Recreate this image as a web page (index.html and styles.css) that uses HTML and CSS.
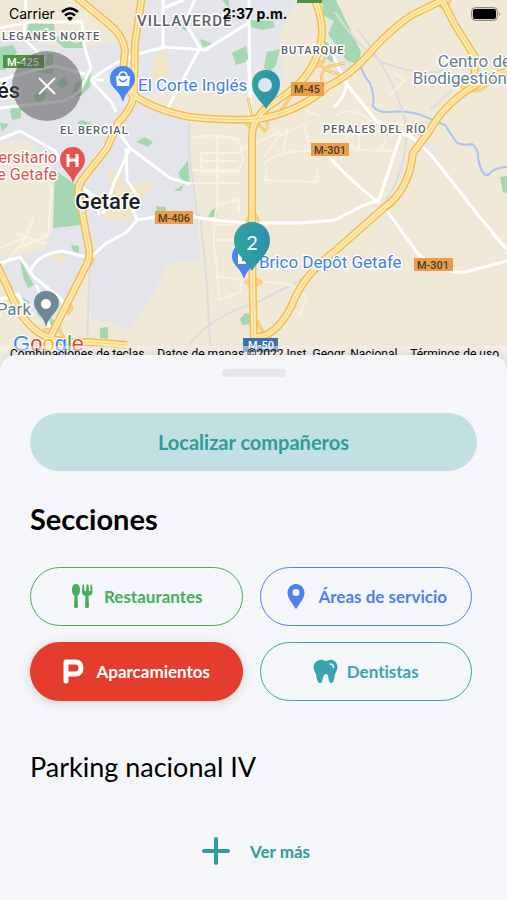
FILE: index.html
```html
<!DOCTYPE html>
<html lang="es">
<head>
    <meta charset="UTF-8">
    <meta name="viewport" content="width=device-width, initial-scale=1.0">
    <title>Mapa - Secciones</title>
    <link rel="stylesheet" href="styles.css">
</head>
<body>
    <header class="map">
        <svg class="map-canvas" viewBox="0 0 507 370" preserveAspectRatio="xMidYMin slice" role="img" aria-label="Mapa de Getafe">
            <defs>
                <linearGradient id="pinFill" x1="0" y1="0" x2="1" y2="0">
                    <stop offset="0" stop-color="#2fa59b"/>
                    <stop offset="1" stop-color="#2e8fb0"/>
                </linearGradient>
                <g id="motorways">
                    <path d="M75 -4 L92 10 L110 25 Q123 36 125 50 L123 72 L129 90 L133 96"/>
                    <path d="M142 -4 L135 43 L134 96 Q131 110 118 123 L107 148 L82 180 Q77 187 79 196 L83 217 L88 243 Q91 254 87 264 L50 338"/>
                    <path d="M132 94 Q154 110 190 117 Q240 122 264 118 Q302 110 328 86 Q352 75 375 47 Q395 26 412 15 L445 -1"/>
                    <path d="M313 -4 Q325 22 321 42 Q318 60 305 77 Q294 90 266 108 Q252 121 252 137 V250 L254 350"/>
                    <path d="M440 -4 L455 25 L475 57 Q476 70 472 87 Q444 105 430 130 L413 153 Q409 190 385 207 L335 251 Q303 275 292 305 Q276 337 256 337"/>
                    <path d="M472 87 Q490 76 511 70"/>
                    <path d="M-4 263 L8 288 Q23 327 47 337 Q64 344 88 342 L127 345"/>
                </g>
                <g id="ramps">
                    <path d="M318 58 Q321 72 340 74 M316 67 Q330 60 324 45 M326 88 Q315 75 330 66 L345 63 M298 87 L274 120 M248 97 L252 118 L266 132 M244 120 L252 130 M267 105 V130"/>
                    <path d="M437 3 Q446 14 451 -2 M466 82 Q486 87 488 76 L497 72 M460 86 Q480 98 490 81 M468 62 L477 78"/>
                    <path d="M406 176 Q404 203 375 216 M43 330 L59 328 Q62 340 75 344 M67 303 Q76 306 67 314 M50 338 L57 324 M94 258 Q90 266 83 272 M246 282 L253 277 L261 282 L253 287 Z M254 293 L250 297 L254 300 M257 320 Q262 335 272 337 M246 222 L253 210 L259 222"/>
                </g>
            </defs>

            <rect width="507" height="370" fill="#f1e9d8"/>

            <!-- urban areas -->
            <path fill="#e6e8ed" d="M0 0 H78 L122 42 L124 76 L104 72 L90 82 L113 108 L118 118 L136 97 L165 88 L215 76 L248 92 L262 105 L282 82 L280 30 L296 0 V0 H143 V44 L135 0 H0 Z"/>
            <path fill="#e3e5ea" d="M0 38 L68 48 L120 42 L125 80 L105 72 L88 83 L116 110 L134 98 L158 112 Q180 116 190 124 L191 180 L197 215 L200 262 L180 260 L165 267 L155 293 L142 312 L128 331 L112 323 L91 319 L90 258 L74 285 L60 312 L45 325 L0 277 V258 L45 250 L53 225 V180 L43 158 L25 139 L0 144 Z"/>
            <path fill="#e4e6eb" d="M143 0 H296 L278 38 L285 76 L260 95 L216 78 L160 92 L140 96 Z"/>
            <path fill="#e4e5e8" d="M325 2 L340 30 L367 67 L334 72 Z"/>
            <path fill="#e7e7e9" d="M418 143 L428 141 L440 152 L432 158 L422 152 Z"/>
            <path fill="#f2e5c7" d="M88 0 H137 L135 43 L127 44 L110 20 Z M151 70 Q158 46 168 52 V78 L152 83 Z M108 170 L121 175 L123 187 L151 181 L151 189 L137 204 L130 222 L101 218 L111 209 Z M52 254 L66 255 L64 264 L51 259 Z"/>

            <!-- parks -->
            <g fill="#a5d7b3">
                <path d="M29 22 L54 24 L55 36 L75 43 L85 41 V48 H64 L53 38 L30 43 L26 35 Z M47 54 L53 54 V74 L34 72 L30 65 L45 66 Z M0 47 L13 45 L17 52 L5 70 H0 Z M57 82 L64 77 L68 83 L63 89 L57 85 Z M33 96 L40 90 L47 92 L44 100 L36 102 Z M10 108 L21 108 V118 L12 120 Z M75 84 L91 73 L90 87 L81 96 L71 97 Z"/>
                <path d="M232 53 L246 46 L249 61 L236 65 Z M267 52 L280 49 L276 65 L268 75 L264 67 Z M250 20 L273 21 L275 27 L262 30 L250 27 Z M222 0 L229 0 L229 8 Z M180 27 L187 21 L186 31 Z M200 39 L214 44 L203 47 Z"/>
                <path d="M322 0 H336 L361 52 L358 64 L347 61 L328 34 L334 21 L323 15 Z"/>
                <path d="M322 38 L336 51 L332 63 L323 55 Z"/>
                <path d="M55 170 L77 186 L81 225 L53 228 Z M61 164 L77 154 L74 166 Z M136 142 L145 137 L153 142 L148 147 Z M178 173 L188 160 L190 185 L184 184 Z M174 191 L184 184 L181 191 Z M211 211 L217 207 V217 H208 Z M83 120 L96 126 L85 134 L77 122 Z M0 123 L9 124 L2 132 Z M156 206 L166 207 V211 H157 Z M71 245 L79 246 V253 L73 251 Z M20 259 L34 285 L28 288 L23 277 Z M100 328 L108 327 V339 L100 338 Z M240 319 L245 313 L252 314 V324 L242 325 Z M500 177 L507 176 V193 L503 192 Z M21 297 L30 302 L26 305 Z M36 306 L60 325 L54 328 L38 315 Z"/>
            </g>

            <!-- water and railways -->
            <g fill="none" stroke="#a9c4ee" stroke-width="2">
                <path d="M360 63 Q362 74 370 83 Q375 97 373 106 Q377 113 390 112 Q407 110 421 115 L445 125 Q450 133 457 143 Q466 146 472 144 Q479 150 478 158 Q482 177 488 175 Q495 167 507 167"/>
            </g>
            <g fill="none" stroke="#dcdcdd" stroke-width="2">
                <path d="M335 12 Q358 47 382 62 Q415 76 444 71 M358 30 Q399 83 407 130 Q405 175 384 203 L335 247 M200 215 L207 285 L210 345 M190 124 Q187 147 192 175 L198 220 M190 343 Q215 314 260 301 L320 270 M90 258 L87 343 M430 110 L452 90"/>
            </g>

            <!-- small streets -->
            <g fill="none" stroke="#f8f2e4" stroke-width="2">
                <path d="M195 137 Q212 133 239 140 L243 160 L238 172 H201 V153 H240 M200 161 H239 M217 137 V205 L239 199 V211 M190 183 H240 M192 170 H240 M240 150 L262 140 L280 132 M263 158 L279 136 L304 124 M267 169 L265 180 L316 182 L318 168 M264 164 Q276 150 316 151 L330 142 M282 156 L288 127 M304 125 L310 150 M217 205 Q211 240 216 260 L219 300 L240 292 L242 277 M215 225 H234 M216 240 H238 M216 276 L240 280 M262 282 L280 283 L292 285 L307 298 L298 317 M335 116 Q350 105 370 120 L404 125 M345 137 L355 150 L395 151 L402 134 M360 137 L358 150 M386 140 L380 150"/>
                <path d="M40 160 L52 190 L48 235 L20 248 M18 233 L45 244 M22 245 L35 215 M0 248 L25 238 M1 268 L20 245 M305 110 L320 116 M390 95 L405 80 L394 73"/>
            </g>
            <g fill="none" stroke="#ffffff" stroke-width="3" stroke-linejoin="round">
                <path d="M0 28 L30 22 H82 L84 45 L91 68 L79 92 L64 101 L0 108 M26 -2 L24 38 L45 60 M0 80 L35 70 L55 66 L85 74 M91 80 Q121 55 163 48 V0 M91 80 L112 103 L116 112 M95 80 H104 M0 139 L20 131 L55 151 L60 160 M79 180 L118 128"/>
                <path d="M163 8 L184 0 M163 47 L205 50 L250 22 M165 113 L200 48 L185 22 L196 -3 M249 0 L250 120 M248 60 L251 98 M330 48 L345 82 Q360 101 379 124 L413 138 L432 156 L478 215 L511 254 M334 107 Q348 95 346 79"/>
                <path d="M117 130 L130 148 L170 178 L190 184 M130 148 L114 183 L103 214 M126 148 L127 180 L137 195 M80 186 L96 197 L99 215 M190 216 Q213 221 250 223 L300 223 L335 220 L362 206 L379 200 L401 134 M325 151 Q340 172 379 203 M385 208 L418 254 Q443 274 465 272 L511 260"/>
                <path d="M0 263 L20 257 L34 277 L60 298 L68 309 M30 275 Q33 255 62 251 L90 258 L105 244 L127 232 L137 220 L155 217 M137 220 L127 195 M0 299 L18 294 L24 305 M36 285 Q45 302 50 330 M492 233 L511 254"/>
            </g>

            <!-- ramps, then motorways: casing, fill and centre line -->
            <use href="#ramps" class="ramp-casing"/>
            <use href="#ramps" class="ramp-fill"/>
            <use href="#motorways" class="road-casing"/>
            <use href="#motorways" class="road-fill"/>
            <use href="#motorways" class="road-line"/>

            <!-- road shields -->
            <g class="shield">
                <rect x="3" y="55" width="41" height="13" fill="#4b963f"/>
                <text x="23" y="66" fill="#fff">M-425</text>
                <rect x="297" y="-8" width="25" height="11" fill="#4b963f"/>
                <rect x="291" y="82" width="33" height="14" fill="#e99e4c"/>
                <text x="307" y="93">M-45</text>
                <rect x="311" y="143" width="38" height="13" fill="#e99e4c"/>
                <text x="330" y="154">M-301</text>
                <rect x="155" y="211" width="38" height="13" fill="#e99e4c"/>
                <text x="174" y="222">M-406</text>
                <rect x="414" y="258" width="39" height="13" fill="#e99e4c"/>
                <text x="433" y="269">M-301</text>
                <rect x="243" y="338" width="35" height="14" fill="#3f70b6"/>
                <text x="261" y="349" fill="#fff">M-50</text>
            </g>

            <!-- place names -->
            <g class="district">
                <text class="district-large" x="137" y="26">VILLAVERDE</text>
                <text x="2" y="40">LEGANÉS NORTE</text>
                <text x="281" y="54">BUTARQUE</text>
                <text x="60" y="134">EL BERCIAL</text>
                <text x="323" y="133">PERALES DEL RÍO</text>
            </g>
            <text class="town" x="75" y="209">Getafe</text>
            <text class="town" x="20" y="98" text-anchor="end">Leganés</text>
            <g class="poi">
                <text class="shop" x="138" y="91">El Corte Inglés</text>
                <text class="shop" x="259" y="268">Brico Depôt Getafe</text>
                <text class="hospital" x="57" y="163" text-anchor="end">Hospital Universitario</text>
                <text class="hospital" x="57" y="180" text-anchor="end">de Getafe</text>
                <text class="place" x="31" y="315" text-anchor="end">Park</text>
                <text class="place" x="511" y="67" text-anchor="end">Centro de</text>
                <text class="place" x="507" y="84" text-anchor="end">Biodigestión</text>
            </g>

            <!-- place pins -->
            <path fill="#4a86ee" d="M123 66 C115 66 110 72 110 79 C110 88 120 90 123 102 C126 90 135 88 135 79 C135 72 130 66 123 66 Z"/>
            <path fill="#fff" d="M116 76 H130 L129 86 H117 Z"/>
            <path fill="none" stroke="#fff" stroke-width="1.5" d="M119 77 Q119 72 123 72 Q127 72 127 77"/>
            <path fill="none" stroke="#4a86ee" stroke-width="1.5" d="M119 79 Q123 84 127 79"/>
            <path fill="#e5534f" d="M73 147 C65 147 60 153 60 160 C60 169 70 172 73 183 C76 172 85 169 85 160 C85 153 80 147 73 147 Z"/>
            <path fill="none" stroke="#fff" stroke-width="3" d="M68 154 V167 M77 154 V167 M68 160 H77"/>
            <path fill="#6e8897" d="M46 291 C38 291 34 297 34 303 C34 312 44 315 46 327 C49 315 59 312 59 303 C59 297 54 291 46 291 Z"/>
            <circle cx="46" cy="304" r="5" fill="#fff"/>
            <path fill="#4a86ee" d="M244 244 C236 244 232 250 232 257 C232 265 241 268 244 279 C247 268 257 265 257 257 C257 250 252 244 244 244 Z"/>
            <path fill="#fff" d="M238 253 L242 257 V261 H246 V264 H238 Z"/>

            <!-- colleagues -->
            <path fill="url(#pinFill)" d="M266 70 C258 70 252 76 252 84 C252 95 261 101 266 109 C271 101 280 95 280 84 C280 76 274 70 266 70 Z"/>
            <circle cx="265" cy="85" r="7" fill="#dce7ea"/>
            <path fill="url(#pinFill)" d="M252 222 C242 222 234 230 234 240 C234 254 246 260 252 271 C258 260 270 254 270 240 C270 230 262 222 252 222 Z"/>
            <text class="pin-count" x="252" y="250">2</text>

            <text class="google" x="13" y="351"><tspan fill="#4285f4">G</tspan><tspan fill="#ea4335">o</tspan><tspan fill="#fbbc05">o</tspan><tspan fill="#4285f4">g</tspan><tspan fill="#34a853">l</tspan><tspan fill="#ea4335">e</tspan></text>
        </svg>

        <div class="status-bar">
            <span class="carrier">Carrier
                <svg width="18" height="14" viewBox="0 0 18 14" aria-hidden="true">
                    <path fill="none" stroke="#000" stroke-width="2.6" d="M1 5 Q9 -2 17 5 M4 8.500 Q9 4 14 8.500"/>
                    <path d="M9 14 L6 11 Q9 8.500 12 11 Z"/>
                </svg>
            </span>
            <strong>2:37 p.m.</strong>
            <svg class="battery" width="30" height="14" viewBox="0 0 30 14" aria-label="Batería llena">
                <rect x="0.500" y="0.500" width="26" height="13" rx="4" fill="#d5cebf" stroke="#8f8a80"/>
                <rect x="2" y="2" width="23" height="10" rx="2"/>
                <path d="M28 5 Q30 7 28 9 Z" fill="#8f8a80"/>
            </svg>
        </div>

        <button class="close-btn" type="button" aria-label="Cerrar">
            <svg width="18" height="18" viewBox="0 0 18 18"><path d="M1 1 L17 17 M17 1 L1 17" stroke="#fff" stroke-width="2"/></svg>
        </button>

        <div class="attribution">
            <span>Combinaciones de teclas</span>
            <span>Datos de mapas ©2022 Inst. Geogr. Nacional</span>
            <a href="#">Términos de uso</a>
        </div>
    </header>

    <main class="sheet">
        <div class="handle"></div>
        <button class="locate-btn" type="button">Localizar compañeros</button>

        <h1>Secciones</h1>
        <div class="sections">
            <button class="section-btn restaurants" type="button">
                <svg class="icon" viewBox="0 0 25 25">
                    <path fill="currentColor" d="M6 0 C3 0 2 3 2 6 C2 9 3 11 4.500 12 L4 23 Q6 25.500 8 23 L7.500 12 C9 11 10 9 10 6 C10 3 9 0 6 0 Z M12.500 1 L12 8 Q12 11 15.500 12 L15 23 Q17 25.500 19 23 L18.500 12 Q22.500 11 22.500 8 L22 1 Q21 -0.500 20.500 1 V7 H19 L18.500 1 Q17.500 -0.500 16.500 1 L16 7 H14.500 L14 1 Q13.500 -0.500 12.500 1 Z"/>
                </svg>
                Restaurantes
            </button>
            <button class="section-btn services" type="button">
                <svg class="icon" viewBox="0 0 25 25">
                    <path fill="currentColor" fill-rule="evenodd" d="M12 0 C7 0 3.500 4 3.500 9 C3.500 14 9 20 11 24 Q12 25.500 13 24 C15 20 20.500 14 20.500 9 C20.500 4 17 0 12 0 Z M12 5 A3.500 3.500 0 1 1 12 12 A3.500 3.500 0 1 1 12 5 Z"/>
                </svg>
                Áreas de servicio
            </button>
            <button class="section-btn parking active" type="button">
                <svg class="icon" viewBox="0 0 25 25">
                    <path fill="none" stroke="currentColor" stroke-width="5" stroke-linecap="round" stroke-linejoin="round" d="M4 22 V3 H13 Q19 3 19 9 Q19 15 13 15 H4"/>
                </svg>
                Aparcamientos
            </button>
            <button class="section-btn dentists" type="button">
                <svg class="icon" viewBox="0 0 25 25">
                    <path fill="currentColor" d="M7 1 C10 0 11 2 13 2 C15 2 16 0 19 1 C24 2 26 8 23 13 C21 16 22 20 20 23 Q18 25 16.500 23 C15 20 16 15 13 15 C10 15 10 20 9 23 Q7 25 5 23 C3 20 4 16 2 13 C-1 8 1 2 7 1 Z"/>
                    <path fill="none" stroke="#f4f6fa" stroke-width="1.500" stroke-linecap="round" d="M17 5 Q20.500 5 20.500 8.500"/>
                </svg>
                Dentistas
            </button>
        </div>

        <h2>Parking nacional IV</h2>
        <button class="more-btn" type="button">
            <svg width="28" height="28" viewBox="0 0 28 28"><path d="M14 2 V26 M2 14 H26" stroke="currentColor" stroke-width="4" stroke-linecap="round"/></svg>
            Ver más
        </button>
    </main>
</body>
</html>
```

FILE: styles.css
```css
body {
    margin: 0;
    min-height: 100vh;
    display: flex;
    flex-direction: column;
    font-family: Lato, sans-serif;
    background-color: #f4f6fa;
}
button {
    font-family: inherit;
    font-weight: bold;
    font-variant-ligatures: none;
    cursor: pointer;
}

/* Map */
.map {
    position: relative;
    overflow: hidden;
}
.map-canvas {
    display: block;
    width: 100%;
    height: 370px;
    font-family: Roboto, sans-serif;
}
.ramp-casing, .ramp-fill, .road-casing, .road-fill, .road-line {
    fill: none;
    stroke-linejoin: round;
}
.ramp-casing {
    stroke: #f5c263;
    stroke-width: 3px;
}
.ramp-fill {
    stroke: #fde7a6;
    stroke-width: 1px;
}
.road-casing {
    stroke: #f6bd50;
    stroke-width: 8px;
}
.road-fill {
    stroke: #fdeaaf;
    stroke-width: 5px;
}
.road-line {
    stroke: #f9d27a;
    stroke-width: 1px;
}
.shield {
    font-size: 11px;
    font-weight: 500;
    text-anchor: middle;
    fill: #4e3a22;
}
.district, .town, .poi {
    paint-order: stroke;
    stroke: #fff;
    stroke-width: 3px;
    stroke-linejoin: round;
}
.district {
    font-size: 11px;
    font-weight: 500;
    letter-spacing: 1px;
    fill: #5d6066;
}
.district-large {
    font-size: 15px;
}
.town {
    font-size: 22px;
    font-weight: 500;
    fill: #1d1f22;
}
.poi {
    font-size: 17px;
}
.shop {
    fill: #4381e6;
}
.hospital {
    font-size: 16px;
    fill: #dd5550;
}
.place {
    fill: #637f91;
}
.pin-count {
    font-family: Lato, sans-serif;
    font-size: 20px;
    text-anchor: middle;
    fill: #fff;
}
.google {
    font-family: "Liberation Sans", sans-serif;
    font-size: 22px;
    paint-order: stroke;
    stroke: #fff;
    stroke-width: 2px;
}
.status-bar {
    position: absolute;
    top: 0;
    left: 0;
    right: 0;
    display: grid;
    grid-template-columns: 1fr auto 1fr;
    align-items: center;
    height: 27px;
    padding: 0 6px 0 9px;
    font-family: Inter, sans-serif;
    font-size: 14px;
}
.carrier {
    display: flex;
    align-items: center;
    gap: 6px;
}
.battery {
    justify-self: end;
}
.close-btn {
    position: absolute;
    top: 51px;
    left: 12px;
    display: flex;
    align-items: center;
    justify-content: center;
    width: 70px;
    height: 70px;
    padding: 0;
    border: none;
    border-radius: 50%;
    background-color: rgba(90, 90, 90, 0.55);
}
.attribution {
    position: absolute;
    left: 0;
    right: 0;
    bottom: 8px;
    display: flex;
    justify-content: space-between;
    padding: 0 8px 0 10px;
    background-color: rgba(245, 245, 245, 0.5);
    font-family: Roboto, sans-serif;
    font-size: 12px;
    line-height: 16px;
    white-space: nowrap;
}
.attribution a {
    color: #000;
    text-decoration: none;
}

/* Bottom sheet */
.sheet {
    position: relative;
    flex: 1;
    display: flex;
    flex-direction: column;
    margin-top: -15px;
    padding: 14px 30px 30px;
    border-radius: 16px 16px 0 0;
    background-color: #f4f6fa;
    box-shadow: 0 -2px 10px rgba(0, 0, 0, 0.1);
}
.handle {
    align-self: center;
    width: 64px;
    height: 8px;
    border-radius: 4px;
    background-color: #e6e7ea;
}
.locate-btn {
    height: 58px;
    margin-top: 36px;
    border: none;
    border-radius: 29px;
    background-color: #c2dfe2;
    color: #2f9d99;
    font-size: 20px;
}
h1 {
    margin: 30px 0;
    font-size: 29px;
    line-height: 36px;
}
.sections {
    display: grid;
    grid-template-columns: 1fr 1fr;
    gap: 16px 17px;
    margin-right: 5px;
}
.section-btn {
    display: flex;
    align-items: center;
    justify-content: center;
    gap: 9px;
    height: 59px;
    padding: 0;
    border: 1px solid currentColor;
    border-radius: 30px;
    background-color: transparent;
    font-size: 17px;
}
.icon {
    flex: none;
    width: 25px;
    height: 25px;
}
.restaurants {
    color: #47ad5b;
}
.services {
    color: #4f80f0;
}
.dentists {
    color: #3aa3ad;
}
.parking.active {
    border-color: #e43d2d;
    background-color: #e43d2d;
    color: #fff;
    box-shadow: 0 2px 12px rgba(0, 0, 0, 0.15);
}
h2 {
    margin: 48px 0 52px;
    font-size: 27px;
    font-weight: normal;
    line-height: 36px;
}
.more-btn {
    align-self: center;
    display: flex;
    align-items: center;
    gap: 20px;
    margin-left: 5px;
    padding: 0;
    border: none;
    background: none;
    color: #2f9d99;
    font-size: 17px;
}
```
